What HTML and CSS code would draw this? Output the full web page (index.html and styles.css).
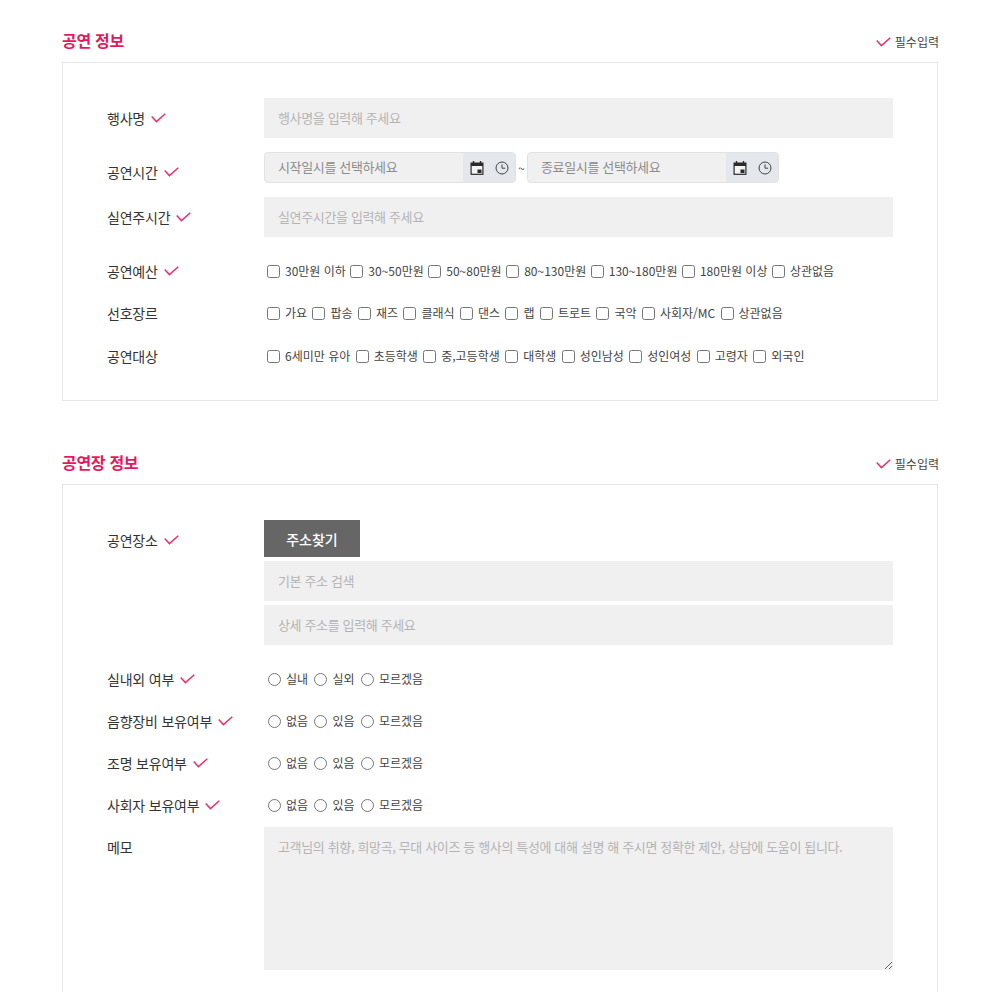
FILE: index.html
```html
<!DOCTYPE html>
<html lang="ko">
<head>
  <meta charset="UTF-8" />
  <title>공연 정보</title>
  <link rel="stylesheet" href="styles.css">
</head>
<body>
  <svg class="defs" width="0" height="0">
    <symbol id="tick" viewBox="0 0 15 10">
      <polyline points="0.7,3.6 5.4,8.6 14.3,0.8" fill="none" stroke="#e8336f" stroke-width="1.5" />
    </symbol>
    <symbol id="cal" viewBox="0 0 14 14">
      <path d="M3.5 0v3M10.5 0v3" stroke="#2b2b2b" stroke-width="1.4" />
      <rect x="1.1" y="2.1" width="11.8" height="11.2" fill="#f4f4f4" stroke="#2b2b2b" stroke-width="1.2" />
      <rect x="1" y="2" width="12" height="3" fill="#2b2b2b" />
      <rect x="7.5" y="8.5" width="4" height="3.5" fill="#2b2b2b" />
    </symbol>
    <symbol id="clock" viewBox="0 0 14 14">
      <circle cx="7" cy="7" r="6" fill="none" stroke="#444" stroke-width="1" />
      <path d="M7 3.4v3.8h3.2" fill="none" stroke="#444" stroke-width="1" />
    </symbol>
  </svg>

  <div class="page">
    <div class="sec-head">
      <h2>공연 정보</h2>
      <span class="req"><svg class="tick"><use href="#tick" /></svg>필수입력</span>
    </div>
    <div class="card card-first">
      <div class="row">
        <div class="lbl">행사명<svg class="tick"><use href="#tick" /></svg></div>
        <div class="field"><input class="txt" type="text" placeholder="행사명을 입력해 주세요"></div>
      </div>
      <div class="row">
        <div class="lbl lbl-date">공연시간<svg class="tick"><use href="#tick" /></svg></div>
        <div class="field dates">
          <div class="picker">
            <input type="text" placeholder="시작일시를 선택하세요">
            <div class="addon">
              <svg class="ico"><use href="#cal" /></svg>
              <svg class="ico"><use href="#clock" /></svg>
            </div>
          </div>
          <span class="tilde">~</span>
          <div class="picker">
            <input type="text" placeholder="종료일시를 선택하세요">
            <div class="addon">
              <svg class="ico"><use href="#cal" /></svg>
              <svg class="ico"><use href="#clock" /></svg>
            </div>
          </div>
        </div>
      </div>
      <div class="row">
        <div class="lbl">실연주시간<svg class="tick"><use href="#tick" /></svg></div>
        <div class="field"><input class="txt" type="text" placeholder="실연주시간을 입력해 주세요"></div>
      </div>
      <div class="row-opt first-opt">
        <div class="lbl">공연예산<svg class="tick"><use href="#tick" /></svg></div>
        <div class="opts opts-tight">
          <label><input type="checkbox">30만원 이하</label>
          <label><input type="checkbox">30~50만원</label>
          <label><input type="checkbox">50~80만원</label>
          <label><input type="checkbox">80~130만원</label>
          <label><input type="checkbox">130~180만원</label>
          <label><input type="checkbox">180만원 이상</label>
          <label><input type="checkbox">상관없음</label>
        </div>
      </div>
      <div class="row-opt">
        <div class="lbl">선호장르</div>
        <div class="opts">
          <label><input type="checkbox">가요</label>
          <label><input type="checkbox">팝송</label>
          <label><input type="checkbox">재즈</label>
          <label><input type="checkbox">클래식</label>
          <label><input type="checkbox">댄스</label>
          <label><input type="checkbox">랩</label>
          <label><input type="checkbox">트로트</label>
          <label><input type="checkbox">국악</label>
          <label><input type="checkbox">사회자/MC</label>
          <label><input type="checkbox">상관없음</label>
        </div>
      </div>
      <div class="row-opt last-opt">
        <div class="lbl">공연대상</div>
        <div class="opts">
          <label><input type="checkbox">6세미만 유아</label>
          <label><input type="checkbox">초등학생</label>
          <label><input type="checkbox">중,고등학생</label>
          <label><input type="checkbox">대학생</label>
          <label><input type="checkbox">성인남성</label>
          <label><input type="checkbox">성인여성</label>
          <label><input type="checkbox">고령자</label>
          <label><input type="checkbox">외국인</label>
        </div>
      </div>
    </div>

    <div class="sec-head sec-second">
      <h2>공연장 정보</h2>
      <span class="req"><svg class="tick"><use href="#tick" /></svg>필수입력</span>
    </div>
    <div class="card">
      <div class="row row-addr">
        <div class="lbl lbl-addr">공연장소<svg class="tick"><use href="#tick" /></svg></div>
        <div class="field addr">
          <button type="button" class="btn">주소찾기</button>
          <input class="txt" type="text" placeholder="기본 주소 검색">
          <input class="txt" type="text" placeholder="상세 주소를 입력해 주세요">
        </div>
      </div>
      <div class="row-opt">
        <div class="lbl">실내외 여부<svg class="tick"><use href="#tick" /></svg></div>
        <div class="opts">
          <label><input type="radio" name="a">실내</label>
          <label><input type="radio" name="a">실외</label>
          <label><input type="radio" name="a">모르겠음</label>
        </div>
      </div>
      <div class="row-opt">
        <div class="lbl">음향장비 보유여부<svg class="tick"><use href="#tick" /></svg></div>
        <div class="opts">
          <label><input type="radio" name="b">없음</label>
          <label><input type="radio" name="b">있음</label>
          <label><input type="radio" name="b">모르겠음</label>
        </div>
      </div>
      <div class="row-opt">
        <div class="lbl">조명 보유여부<svg class="tick"><use href="#tick" /></svg></div>
        <div class="opts">
          <label><input type="radio" name="c">없음</label>
          <label><input type="radio" name="c">있음</label>
          <label><input type="radio" name="c">모르겠음</label>
        </div>
      </div>
      <div class="row-opt">
        <div class="lbl">사회자 보유여부<svg class="tick"><use href="#tick" /></svg></div>
        <div class="opts">
          <label><input type="radio" name="d">없음</label>
          <label><input type="radio" name="d">있음</label>
          <label><input type="radio" name="d">모르겠음</label>
        </div>
      </div>
      <div class="row row-memo">
        <div class="lbl lbl-memo">메모</div>
        <div class="field">
          <textarea placeholder="고객님의 취향, 희망곡, 무대 사이즈 등 행사의 특성에 대해 설명 해 주시면 정확한 제안, 상담에 도움이 됩니다."></textarea>
        </div>
      </div>
    </div>
  </div>
</body>
</html>
```

FILE: styles.css
```css
* {
  box-sizing: border-box;
}

html, body {
  margin: 0;
  padding: 0;
  background: #fff;
}

body {
  font-family: "Noto Sans CJK KR", "Noto Sans", sans-serif;
  color: #333;
  font-size: 14px;
}

.defs {
  display: block;
}

.page {
  width: 1000px;
  height: 992px;
  padding: 0 62px;
  overflow: hidden;
}

.sec-head {
  height: 62px;
  padding-bottom: 10px;
  display: flex;
  justify-content: space-between;
  align-items: flex-end;
}

.sec-second {
  height: 83px;
}

.sec-head h2 {
  margin: 0;
  font-size: 16px;
  font-weight: 700;
  line-height: 24px;
  letter-spacing: -0.3px;
  color: #e8175d;
}

.req {
  display: flex;
  align-items: center;
  font-size: 12px;
  line-height: 20px;
  color: #444;
  margin-right: -1px;
}

.req .tick {
  margin: 0 4px 0 0;
}

.tick {
  width: 15px;
  height: 10px;
  margin-left: 6px;
  flex: none;
}

.card {
  border: 1px solid #e6e6e6;
  padding: 35px 44px 23px;
}

.card-first {
  height: 339px;
}

.row {
  display: flex;
  align-items: center;
  margin-bottom: 14px;
}

.row-addr {
  margin-bottom: 13px;
}

.row-opt {
  display: flex;
  align-items: center;
  height: 42px;
}

.first-opt {
  margin-top: -1px;
}

.last-opt {
  margin-top: 1px;
}

.lbl {
  width: 157px;
  flex: none;
  display: flex;
  align-items: center;
  font-size: 14px;
  line-height: 20px;
  letter-spacing: -0.2px;
  color: #333;
}

.lbl-date {
  margin-top: 9px;
}

.lbl-addr {
  align-self: flex-start;
  margin-top: 10px;
}

.lbl-memo {
  align-self: flex-start;
  margin-top: 10px;
}

.row-memo {
  margin-top: 1px;
}

.field {
  flex: 1;
  min-width: 0;
}

.txt, textarea {
  display: block;
  width: 100%;
  border: none;
  outline: none;
  background: #f0f0f0;
  font-family: inherit;
  font-size: 13px;
  letter-spacing: -0.36px;
  color: #333;
}

.txt {
  height: 40px;
  padding: 0 14px 2px;
}

textarea {
  height: 143px;
  padding: 10px 14px;
  line-height: 20px;
}

input::placeholder, textarea::placeholder {
  color: #b4b4b4;
  opacity: 1;
}

.dates {
  display: flex;
  align-items: center;
}

.picker {
  display: flex;
  width: 252px;
  height: 31px;
  border: 1px solid #e0e2e6;
  border-radius: 4px;
  overflow: hidden;
  background: #f0f0f0;
}

.picker input {
  flex: 1;
  min-width: 0;
  border: none;
  outline: none;
  background: transparent;
  padding: 0 13px 2px;
  font-family: inherit;
  font-size: 13px;
  letter-spacing: -0.36px;
}

.picker input::placeholder {
  color: #8c8c8c;
}

.addon {
  width: 52px;
  flex: none;
  background: #e4e7ec;
  display: flex;
  align-items: center;
  justify-content: space-between;
  padding: 0 6px 0 7px;
}

.ico {
  width: 14px;
  height: 14px;
}

.tilde {
  width: 11px;
  text-align: center;
  font-size: 12px;
  color: #555;
}

.opts {
  display: flex;
  align-items: center;
  font-size: 12px;
  color: #444;
}

.opts label {
  display: flex;
  align-items: center;
  line-height: 18px;
  margin-right: 2.4px;
}

.opts-tight label {
  margin-right: 1.5px;
}

.opts input {
  margin: 0 5px 0 3px;
  flex: none;
}

.opts input[type="radio"] {
  margin-left: 4px;
}

.addr .txt {
  margin-top: 4px;
}

.btn {
  display: block;
  width: 96px;
  height: 37px;
  border: none;
  background: #666;
  color: #fff;
  font-family: inherit;
  font-size: 14px;
  font-weight: 500;
}
```
